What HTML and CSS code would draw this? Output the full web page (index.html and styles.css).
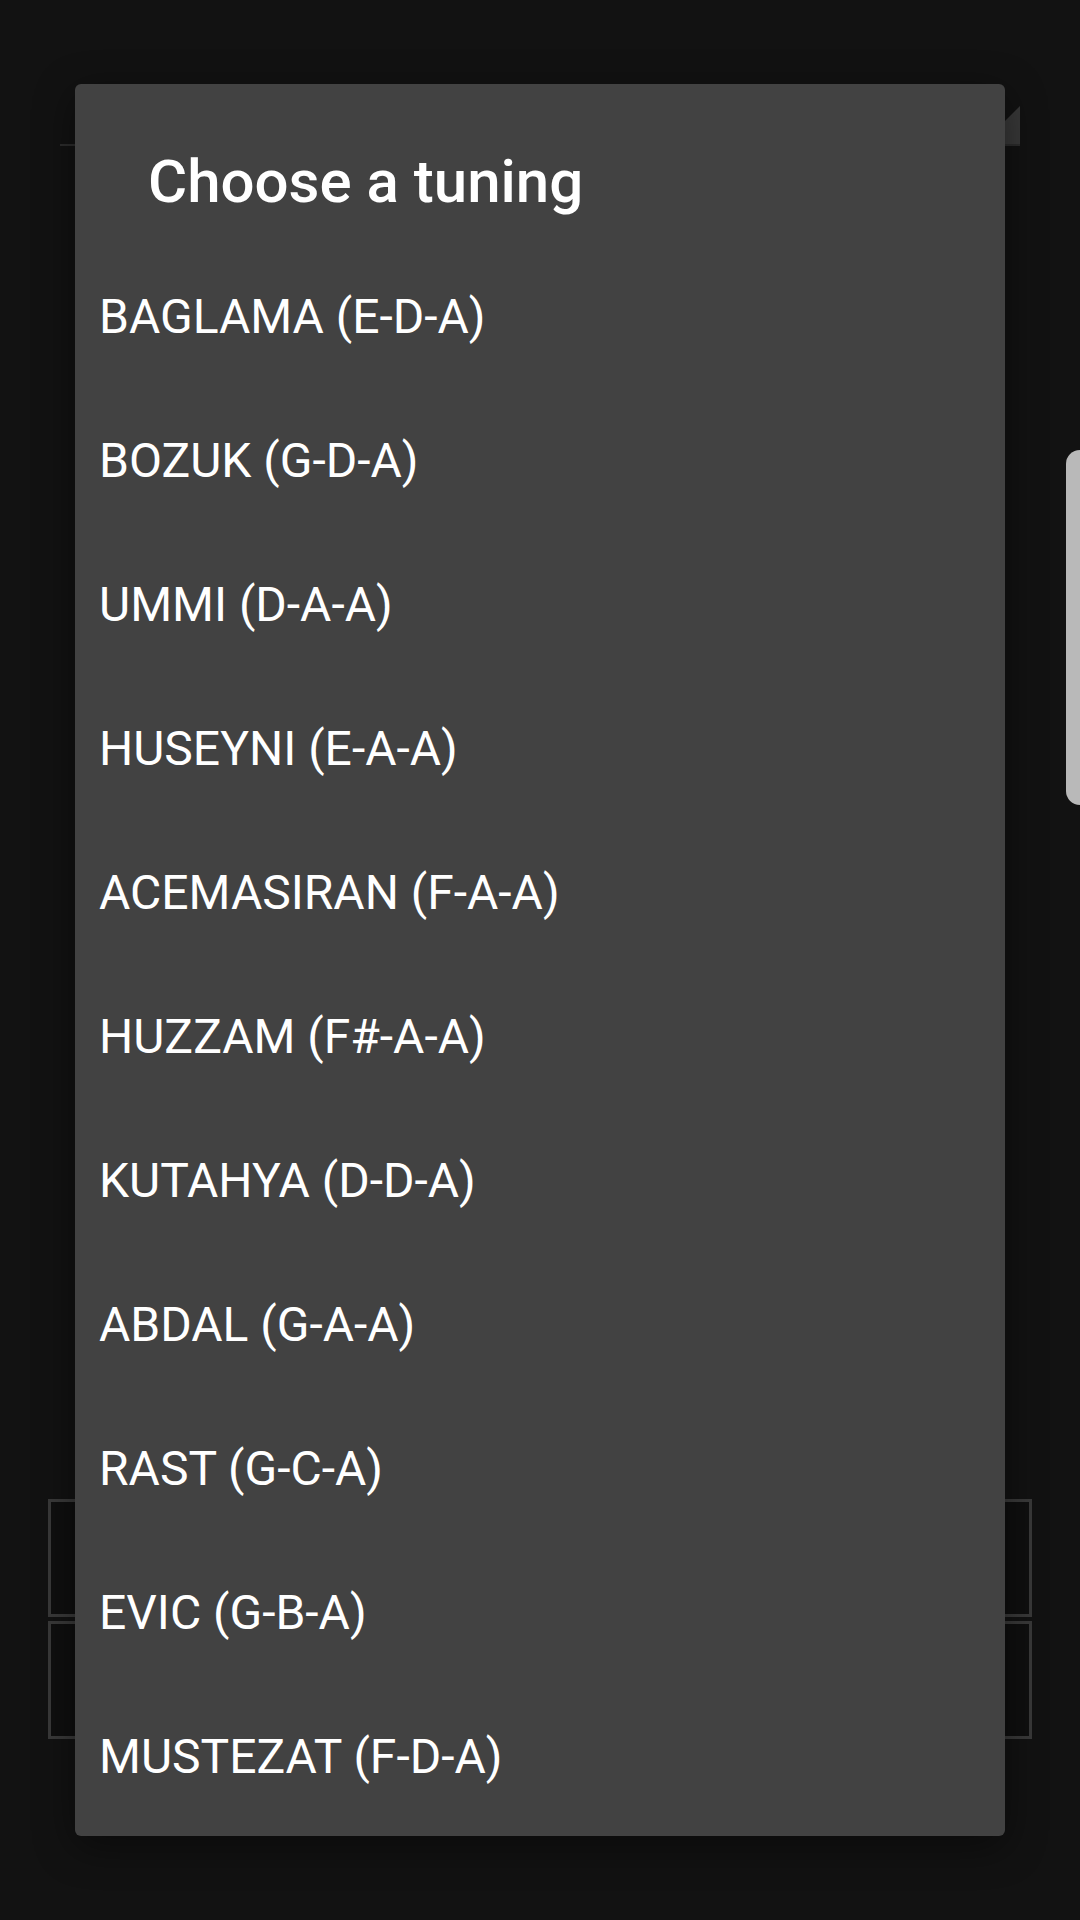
FILE: index.html
```html
<!DOCTYPE html>
<html lang="en">
<head>
<meta charset="utf-8">
<title>Choose a tuning</title>
<link rel="stylesheet" href="styles.css">
</head>
<body>
<div class="screen">
  <div class="background">
    <div class="spinner">
      <span class="spinner-caret"></span>
    </div>
    <div class="spacer"></div>
    <div class="boxes">
      <div class="box"></div>
      <div class="box"></div>
    </div>
  </div>

  <div class="edge-handle"></div>

  <div class="dialog">
    <h1 class="dialog-title">Choose a tuning</h1>
    <ul class="tuning-list">
      <li class="tuning-item">BAGLAMA (E-D-A)</li>
      <li class="tuning-item">BOZUK (G-D-A)</li>
      <li class="tuning-item">UMMI (D-A-A)</li>
      <li class="tuning-item">HUSEYNI (E-A-A)</li>
      <li class="tuning-item">ACEMASIRAN (F-A-A)</li>
      <li class="tuning-item">HUZZAM (F#-A-A)</li>
      <li class="tuning-item">KUTAHYA (D-D-A)</li>
      <li class="tuning-item">ABDAL (G-A-A)</li>
      <li class="tuning-item">RAST (G-C-A)</li>
      <li class="tuning-item">EVIC (G-B-A)</li>
      <li class="tuning-item">MUSTEZAT (F-D-A)</li>
    </ul>
  </div>
</div>
</body>
</html>
```

FILE: styles.css
```css
* {
  box-sizing: border-box;
}

html, body {
  margin: 0;
  padding: 0;
  background: #121212;
}

body {
  font-family: Roboto, "Noto Sans", "Liberation Sans", sans-serif;
  color: #ffffff;
}

.screen {
  position: relative;
  width: 1080px;
  height: 1920px;
  overflow: hidden;
  background: #121212;
}

.background {
  display: flex;
  flex-direction: column;
  height: 100%;
  padding: 108px 48px 0 48px;
}

.spinner {
  position: relative;
  margin: 0 12px 0 12px;
  height: 38px;
  border-bottom: 2px solid #2c2c2c;
}

.spinner-caret {
  position: absolute;
  right: 0;
  bottom: 0;
  width: 0;
  height: 0;
  border-left: 38px solid transparent;
  border-bottom: 38px solid #383838;
}

.spacer {
  height: 1353px;
}

.boxes {
  display: flex;
  flex-direction: column;
  gap: 4px;
}

.box {
  height: 118px;
  border: 3px solid #393939;
  background: #0f0f0f;
}

.edge-handle {
  position: absolute;
  right: 0;
  top: 450px;
  width: 14px;
  height: 355px;
  background: #b9b9b9;
  border-radius: 14px 0 0 14px;
}

.dialog {
  position: absolute;
  left: 75px;
  top: 84px;
  width: 930px;
  height: 1752px;
  background: #424242;
  border-radius: 6px;
  box-shadow: 0 10px 40px rgba(0, 0, 0, 0.45);
  padding: 58px 0 0 0;
}

.dialog-title {
  margin: 0;
  padding: 0 0 0 73px;
  font-size: 60px;
  line-height: 80px;
  font-weight: 500;
  color: #ffffff;
}

.tuning-list {
  list-style: none;
  margin: 23px 0 0 0;
  padding: 0;
}

.tuning-item {
  height: 144px;
  line-height: 144px;
  padding: 0 24px;
  font-size: 48px;
  font-weight: 400;
  color: #ffffff;
  white-space: nowrap;
}
```
